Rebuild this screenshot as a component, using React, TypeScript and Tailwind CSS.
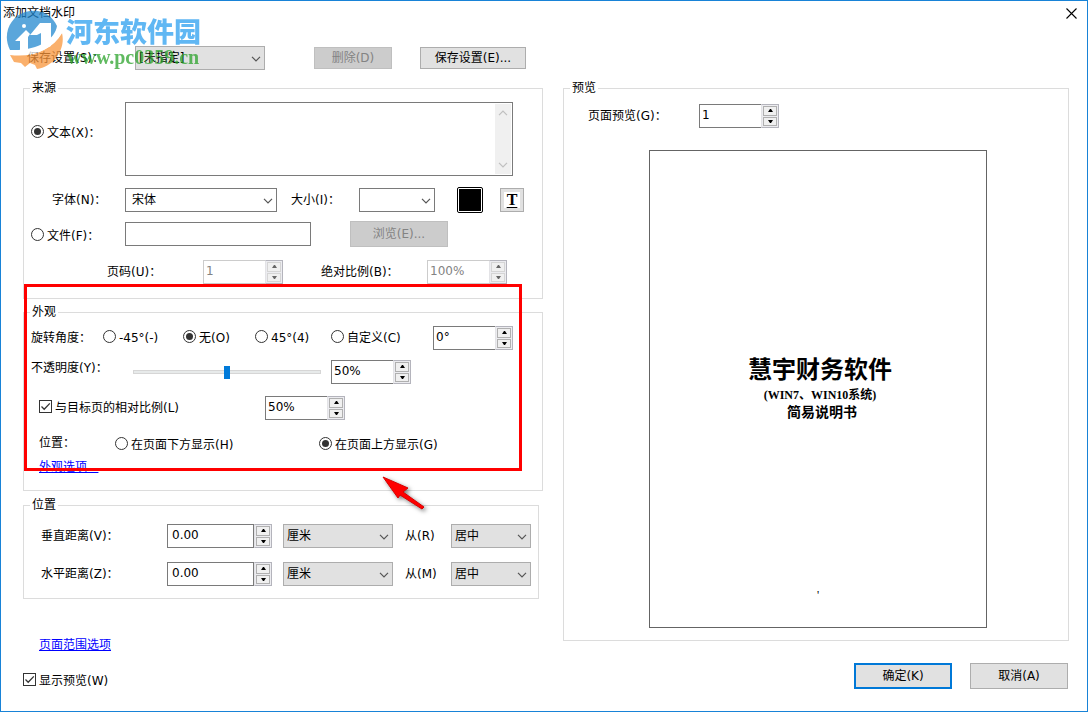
import React, { useId, useState } from 'react';
import clsx from 'clsx';

const Chevron = ({ className }: { className?: string }) => (
  <svg viewBox="0 0 10 6" fill="none" stroke="currentColor" className={clsx("w-[10px] h-[6px]", className)}>
    <path d="M1 0.8 L5 4.8 L9 0.8" strokeWidth="1.2" />
  </svg>
);

interface DropdownProps {
  id: string;
  options: string[];
  flat?: boolean;
  className?: string;
}

const Dropdown: React.FC<DropdownProps> = ({ id, options, flat, className }) => (
  <div className={clsx("relative h-6 shrink-0", className)}>
    <select
      id={id}
      aria-label={id}
      className={clsx(
        "appearance-none w-full h-full border text-xs text-black outline-none",
        flat ? "bg-white border-[#7a7a7a] pl-[6px]" : "bg-[#e1e1e1] border-[#adadad] pl-[3px]"
      )}
    >
      {options.map((option) => (
        <option key={option}>{option}</option>
      ))}
    </select>
    <Chevron className="absolute right-1 top-[10px] text-[#555555] pointer-events-none" />
  </div>
);

interface SpinnerProps {
  id: string;
  value: string;
  disabled?: boolean;
  wide?: boolean;
}

const Spinner: React.FC<SpinnerProps> = ({ id, value, disabled, wide }) => (
  <div className={clsx("flex h-6 shrink-0", wide ? "w-[105px]" : "w-20")}>
    <input
      id={id}
      type="text"
      defaultValue={value}
      disabled={disabled}
      className={clsx(
        "min-w-0 flex-1 border bg-white pb-[3px] text-xs outline-none",
        wide ? "pl-1" : "border-r-0 pl-[2px]",
        disabled ? "border-[#cccccc] text-[#838383]" : "border-[#7a7a7a] text-black"
      )}
    />
    <div className="w-[18px] flex flex-col gap-px border border-[#b4b4bc] border-l-[#e3e3e6] bg-[#ececf0] p-px">
      {["up", "down"].map((dir) => (
        <button
          key={dir}
          type="button"
          disabled={disabled}
          aria-label={dir}
          className={clsx(
            "flex-1 min-h-0 flex items-center justify-center border bg-[#f0f0f0]",
            disabled ? "border-[#d5d5d5] text-[#666666]" : "border-[#b0b0b0] text-black"
          )}
        >
          <svg viewBox="0 0 5 3" fill="currentColor" className="w-[5px] h-[3px]">
            <path d={dir === "up" ? "M0 3 L2 0 H3 L5 3 Z" : "M0 0 L2 3 H3 L5 0 Z"} />
          </svg>
        </button>
      ))}
    </div>
  </div>
);

interface RadioProps {
  name: string;
  label: string;
  checked?: boolean;
  className?: string;
}

const Radio: React.FC<RadioProps> = ({ name, label, checked, className }) => {
  const id = useId();
  return (
    <div className={clsx("flex shrink-0", className)}>
      <input
        id={id}
        type="radio"
        name={name}
        defaultChecked={checked}
        className="appearance-none w-[13px] h-[13px] shrink-0 grid place-content-center rounded-full border border-[#333333] bg-white before:w-[7px] before:h-[7px] before:rounded-full checked:before:bg-[#333333]"
      />
      <label htmlFor={id} className="pl-[3px] whitespace-nowrap">{label}</label>
    </div>
  );
};

interface CheckProps {
  label: string;
  className?: string;
}

const Check: React.FC<CheckProps> = ({ label, className }) => {
  const id = useId();
  return (
    <div className={clsx("relative flex shrink-0", className)}>
      <input
        id={id}
        type="checkbox"
        defaultChecked
        className="peer appearance-none w-[13px] h-[13px] shrink-0 border border-[#333333] bg-white"
      />
      <svg
        viewBox="0 0 13 13"
        fill="none"
        stroke="#333333"
        strokeWidth="1.3"
        className="absolute w-[13px] h-[13px] hidden peer-checked:block pointer-events-none"
      >
        <path d="M2.5 6.5 L5.2 9.2 L10.8 3.4" />
      </svg>
      <label htmlFor={id} className="pl-[3px] whitespace-nowrap">{label}</label>
    </div>
  );
};

interface GroupProps {
  title: string;
  className?: string;
  children: React.ReactNode;
}

const Group: React.FC<GroupProps> = ({ title, className, children }) => (
  <fieldset className={clsx("border border-[#dcdcdc]", className)}>
    <legend className="ml-[6px] px-[2px]">{title}</legend>
    {children}
  </fieldset>
);

interface PushButtonProps {
  disabled?: boolean;
  primary?: boolean;
  className?: string;
  children: React.ReactNode;
}

const PushButton: React.FC<PushButtonProps> = ({ disabled, primary, className, children }) => (
  <button
    type="button"
    disabled={disabled}
    className={clsx(
      "shrink-0 flex items-center justify-center",
      primary ? "border-2 border-[#0078d7]" : "border",
      disabled
        ? "border-[#bfbfbf] bg-[#cccccc] text-[#838383]"
        : "bg-[#e1e1e1] text-black",
      !disabled && !primary && "border-[#adadad]",
      className
    )}
  >
    {children}
  </button>
);

const Watermark = () => (
  <div className="absolute left-1 top-2 flex items-start pointer-events-none opacity-75">
    <svg viewBox="4 8 60 60" className="w-[60px] h-[60px]">
      <path
        d="M9 49 C1 33 9 16 24 11 C38 7 50 12 56 25 C54 38 38 50 9 49 Z"
        fill="#2389cf"
      />
      <path d="M61 32 C65 48 53 66 36 68 L34 64 L29 62 L24 66 L20 62 L13 61 L9 54 C31 57 51 49 61 32 Z" fill="#f9963b" />
      <path d="M14 40 L25 29 L29 33 L27 36 V50 H19 V40 Z" fill="#ffffff" />
      <path d="M29 34 L39 22 H50 V45 L40 49 V32 L36 34 Z" fill="#ffffff" />
      <circle cx="23" cy="25" r="2" fill="#ffffff" />
      <path d="M17 50 C34 51 50 42 57 28 L61 32 C51 49 31 57 13 53 Z" fill="#ffffff" />
    </svg>
    <div className="flex flex-col pt-[7px]">
      <span className="pl-px font-['Noto_Sans_CJK_SC',sans-serif] text-[27px] leading-[29px] font-black text-[#2c9ff0]">河东软件园</span>
      <span className="pl-[2px] font-['Liberation_Serif',serif] text-xl leading-6 font-bold text-[#2ba32b]">www.pc0359.cn</span>
    </div>
  </div>
);

const distances = [
  { id: "vertical", label: "垂直距离(V)：", from: "从(R)" },
  { id: "horizontal", label: "水平距离(Z)：", from: "从(M)" },
];

const SourceGroup = () => (
  <Group title="来源" className="pb-[14px]">
    <div className="flex items-start mt-[6px] pl-[7px] pr-[29px]">
      <Radio name="source" label="文本(X)：" checked className="w-[94px] pt-[23px]" />
      <div className="flex flex-1 h-[74px] border border-[#7a7a7a] p-px">
        <textarea aria-label="文本" className="flex-1 min-w-0 resize-none outline-none" />
        <div className="w-4 flex flex-col items-center justify-between bg-[#f0f0f0] py-[6px] text-[#bfbfbf]">
          <Chevron className="rotate-180" />
          <Chevron />
        </div>
      </div>
    </div>

    <div className="flex items-center mt-[11px] pl-7">
      <label htmlFor="font" className="w-[73px]">字体(N)：</label>
      <Dropdown id="font" options={["宋体"]} flat className="w-[152px]" />
      <label htmlFor="size" className="w-[68px] ml-[14px]">大小(I)：</label>
      <Dropdown id="size" options={[""]} flat className="w-[76px]" />
      <button type="button" aria-label="颜色" className="ml-[22px] w-[26px] h-[26px] rounded-[2px] border border-black bg-white p-px">
        <span className="block w-full h-full bg-black" />
      </button>
      <button type="button" className="ml-[17px] w-6 h-6 border border-[#adadad] bg-[#e1e1e1] p-[3px]">
        <span className="flex items-center justify-center w-full h-full bg-white font-['Liberation_Serif',serif] text-base font-bold underline underline-offset-2">T</span>
      </button>
    </div>

    <div className="flex items-center mt-2 pl-[7px]">
      <Radio name="source" label="文件(F)：" className="w-[94px] pt-1" />
      <input type="text" aria-label="文件" className="w-[186px] h-6 border border-[#7a7a7a] outline-none" />
      <PushButton disabled className="ml-[39px] w-[98px] h-[26px]">浏览(E)...</PushButton>
    </div>

    <div className="flex items-center mt-[13px] pl-[83px]">
      <label htmlFor="page-no" className="w-24">页码(U)：</label>
      <Spinner id="page-no" value="1" disabled />
      <label htmlFor="abs-scale" className="w-[106px] ml-[38px]">绝对比例(B)：</label>
      <Spinner id="abs-scale" value="100%" disabled />
    </div>
  </Group>
);

const AppearanceGroup = () => {
  const [opacity, setOpacity] = useState(50);

  return (
    <div className="relative mt-[5px]">
      <Group title="外观" className="pb-[15px]">
        <div className="flex items-center mt-[6px] pl-[7px]">
          <span className="w-[72px]">旋转角度：</span>
          <Radio name="angle" label="-45°(-)" className="w-20" />
          <Radio name="angle" label="无(O)" checked className="w-[72px]" />
          <Radio name="angle" label="45°(4)" className="w-[76px]" />
          <Radio name="angle" label="自定义(C)" className="w-[102px]" />
          <Spinner id="angle-value" value="0°" />
        </div>

        <div className="flex items-center mt-[10px] pl-[7px]">
          <label htmlFor="opacity" className="w-[102px] self-start">不透明度(Y)：</label>
          <input
            id="opacity"
            type="range"
            value={opacity}
            onChange={(e) => setOpacity(Number(e.target.value))}
            className="appearance-none w-[188px] h-1 mr-[10px] border border-[#d6d6d6] bg-[#e7eaea] [&::-webkit-slider-thumb]:appearance-none [&::-webkit-slider-thumb]:w-[6px] [&::-webkit-slider-thumb]:h-[13px] [&::-webkit-slider-thumb]:bg-[#007ad9]"
          />
          <Spinner id="opacity-value" value="50%" />
        </div>

        <div className="flex items-center mt-3 pl-[15px]">
          <Check label="与目标页的相对比例(L)" className="w-[226px]" />
          <Spinner id="scale-value" value="50%" />
        </div>

        <div className="flex items-center h-6 mt-[11px] pl-[15px]">
          <span className="w-[76px]">位置：</span>
          <Radio name="layer" label="在页面下方显示(H)" className="w-[204px] pt-1" />
          <Radio name="layer" label="在页面上方显示(G)" checked className="pt-1" />
        </div>

        <div className="mt-1 pl-[15px]">
          <a href="#appearance" className="block w-fit text-[#0000ff] underline">外观选项...</a>
        </div>
      </Group>

      {/* callout frame and arrow */}
      <div className="absolute left-px -top-5 right-[21px] bottom-5 border-[3px] border-[#ff0000] pointer-events-none" />
      <svg
        viewBox="0 0 48 40"
        className="absolute left-[358px] -bottom-6 w-12 h-10 pointer-events-none drop-shadow-[2px_2px_2px_rgba(0,0,0,0.5)]"
      >
        <path d="M2 2 L27 13 L22 17 L43 32 L41 34 L19 20 L17 23 Z" fill="#ff0000" stroke="#d80000" strokeWidth="1" />
      </svg>
    </div>
  );
};

const PositionGroup = () => (
  <Group title="位置" className="mt-[6px] mr-1 pb-3">
    <div className="flex flex-col gap-[14px] mt-[11px] pl-[17px]">
      {distances.map((row) => (
        <div key={row.id} className="flex items-center">
          <label htmlFor={row.id} className="w-[126px]">{row.label}</label>
          <Spinner id={row.id} value="0.00" wide />
          <Dropdown id={`${row.id}-unit`} options={["厘米"]} className="w-[110px] ml-[11px]" />
          <label htmlFor={`${row.id}-from`} className="w-[46px] ml-3">{row.from}</label>
          <Dropdown id={`${row.id}-from`} options={["居中"]} className="w-20" />
        </div>
      ))}
    </div>
  </Group>
);

const PreviewPanel = () => (
  <div className="flex flex-col">
    <Group title="预览" className="pb-3">
      <div className="flex items-center mt-2 pl-6">
        <label htmlFor="preview-page" className="w-[111px]">页面预览(G)：</label>
        <Spinner id="preview-page" value="1" />
      </div>
      <div className="flex justify-center mt-[22px] pl-1">
        <div className="flex flex-col items-center w-[338px] max-w-full aspect-[338/478] border border-[#646464] pt-[202px] pb-6 text-center font-bold font-['Liberation_Serif','Noto_Sans_CJK_SC',serif]">
          <p className="pl-1 text-2xl leading-[34px]">慧宇财务软件</p>
          <p className="pl-1 leading-[17px]">(WIN7、WIN10系统)</p>
          <p className="pl-2 text-sm leading-[17px]">简易说明书</p>
          <span className="mt-auto leading-4 font-normal">'</span>
        </div>
      </div>
    </Group>
    <div className="flex justify-end gap-[18px] mt-[22px] pr-px">
      <PushButton primary className="w-[98px] h-[26px]">确定(K)</PushButton>
      <PushButton className="w-[98px] h-[26px]">取消(A)</PushButton>
    </div>
  </div>
);

export default function App() {
  return (
    <div className="relative min-h-screen border border-[#1883d7] bg-white text-black text-xs leading-4 font-['DejaVu_Sans','Noto_Sans_CJK_SC',sans-serif]">
      <header className="flex items-center justify-between h-6 pl-[2px] pr-[10px]">
        <h1>添加文档水印</h1>
        <button type="button" aria-label="关闭">
          <svg viewBox="0 0 11 11" stroke="#000000" strokeWidth="1.1" className="w-[11px] h-[11px]">
            <path d="M0.5 0.5 L10.5 10.5 M10.5 0.5 L0.5 10.5" />
          </svg>
        </button>
      </header>

      <div className="flex items-center mt-[21px] pl-[26px]">
        <label htmlFor="preset" className="w-[108px]">保存设置(S)：</label>
        <Dropdown id="preset" options={["[未指定]"]} className="w-[130px]" />
        <PushButton disabled className="ml-[49px] w-[78px] h-[22px]">删除(D)</PushButton>
        <PushButton className="ml-7 w-[106px] h-[22px]">保存设置(E)...</PushButton>
      </div>

      <main className="grid grid-cols-[520px_minmax(0,1fr)] gap-5 mt-[10px] pl-[22px] pr-[18px]">
        <div className="flex flex-col">
          <SourceGroup />
          <AppearanceGroup />
          <PositionGroup />
          <a href="#range" className="w-fit mt-[38px] ml-4 text-[#0000ff] underline">页面范围选项</a>
          <Check label="显示预览(W)" className="mt-5" />
        </div>
        <PreviewPanel />
      </main>

      <Watermark />
    </div>
  );
}
